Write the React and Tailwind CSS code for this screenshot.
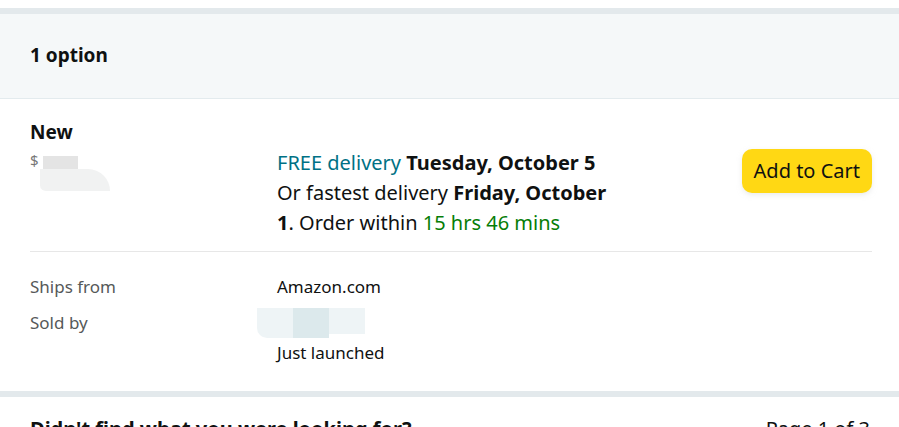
import React from 'react';

const font = { fontFamily: '"Noto Sans", "Open Sans", Arial, sans-serif' };

const App = () => {
    return (
        <div className="w-[899px] h-[427px] overflow-hidden bg-white text-[#0f1111]" style={font}>
            {/* top spacer + band */}
            <div className="h-[8px] bg-white" />
            <div className="h-[6px] bg-[#e3e9ec]" />

            {/* Header */}
            <div className="h-[85px] bg-[#f5f8f9] border-b border-[#e3ebee] flex items-center pl-[30px] pr-[27px]">
                <h2 className="text-[19px] font-bold leading-none mt-[-2px]">1 option</h2>
            </div>

            {/* Offer */}
            <div className="pl-[30px] pr-[27px] pt-[21px]">
                <div className="flex">
                    <div className="w-[247px] shrink-0">
                        <p className="text-[19px] font-bold leading-[24px]">New</p>
                        {/* blurred price */}
                        <div className="relative h-[44px] mt-[6px]">
                            <span className="absolute left-0 top-[3px] text-[15px] leading-none text-[#777]">$</span>
                            <div className="absolute left-[13px] top-[6px] w-[35px] h-[13px] bg-[#e4e4e4]" />
                            <div className="absolute left-[10px] top-[19px] w-[70px] h-[22px] bg-[#f1f2f2] rounded-bl-[8px] rounded-tr-[30px]" />
                        </div>
                    </div>
                    <div className="flex-1 pt-[28px] text-[20px] leading-[30px]">
                        <p>
                            <span className="text-[#007185]">FREE delivery</span> <span className="font-bold">Tuesday, October 5</span>
                        </p>
                        <p>
                            Or fastest delivery <span className="font-bold">Friday, October</span>
                        </p>
                        <p>
                            <span className="font-bold">1</span>. Order within <span className="text-[#067d06]">15 hrs 46 mins</span>
                        </p>
                    </div>
                    <div className="pt-[29px]">
                        <button className="h-[44px] px-[12px] rounded-[10px] bg-[#ffd814] text-[20px] leading-none shadow-[0_2px_5px_rgba(213,217,217,0.5)]">
                            Add to Cart
                        </button>
                    </div>
                </div>

                <div className="border-t border-[#e7e7e7] mt-[13px]" />

                {/* Seller info */}
                <div className="pt-[20px] pb-[23px] text-[17px] leading-[30px]">
                    <div className="flex h-[30px]">
                        <span className="w-[247px] text-[#565959]">Ships from</span>
                        <span>Amazon.com</span>
                    </div>
                    <div className="flex h-[30px] mt-[6px]">
                        <span className="w-[247px] text-[#565959]">Sold by</span>
                        <div className="flex h-[30px] ml-[-20px]">
                            <div className="w-[36px] bg-[#eef4f6] rounded-bl-[10px]" />
                            <div className="w-[36px] bg-[#dce9ec]" />
                            <div className="w-[36px] h-[26px] bg-[#eef4f6]" />
                        </div>
                    </div>
                    <div className="flex h-[30px]">
                        <span className="w-[247px]" />
                        <span>Just launched</span>
                    </div>
                </div>
            </div>

            {/* bottom band */}
            <div className="h-[6px] bg-[#e3e9ec]" />

            <div className="flex justify-between pl-[30px] pr-[29px] pt-[18px] text-[20px] leading-[28px]">
                <span className="font-bold">Didn't find what you were looking for?</span>
                <span>Page 1 of 3</span>
            </div>
        </div>
    );
};

export default App;
